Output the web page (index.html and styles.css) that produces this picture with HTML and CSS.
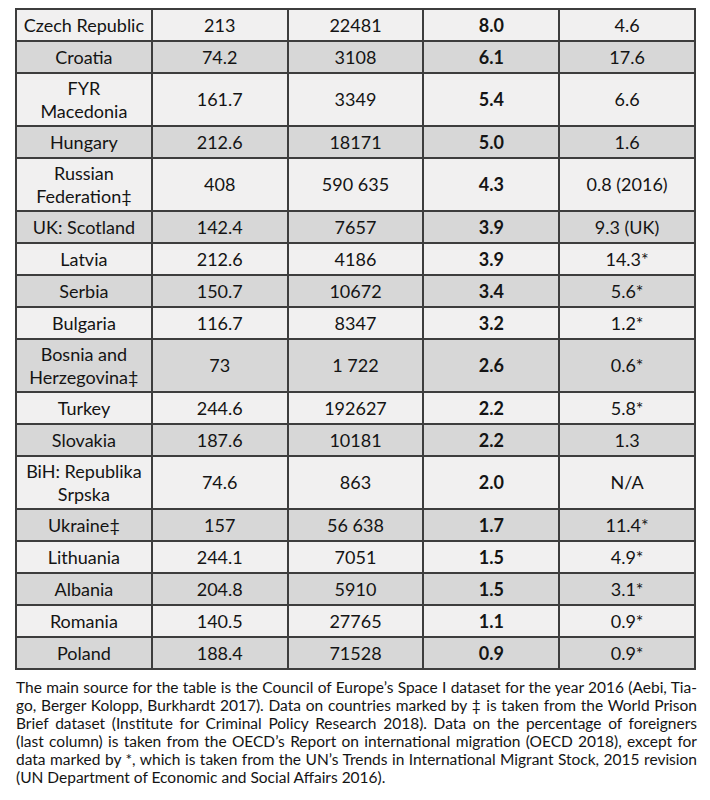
FILE: index.html
```html
<!DOCTYPE html>
<html>
<head>
<meta charset="utf-8">
<link rel="stylesheet" href="styles.css">
</head>
<body>
<div class="page">
<table class="data">
<colgroup><col><col><col><col><col></colgroup>
<tbody>
<tr class="r-light"><td>Czech Republic</td><td>213</td><td>22481</td><td class="b">8.0</td><td>4.6</td></tr>
<tr class="r-dark"><td>Croatia</td><td>74.2</td><td>3108</td><td class="b">6.1</td><td>17.6</td></tr>
<tr class="r-light tall"><td>FYR<br>Macedonia</td><td>161.7</td><td>3349</td><td class="b">5.4</td><td>6.6</td></tr>
<tr class="r-dark"><td>Hungary</td><td>212.6</td><td>18171</td><td class="b">5.0</td><td>1.6</td></tr>
<tr class="r-light tall"><td>Russian<br>Federation‡</td><td>408</td><td>590 635</td><td class="b">4.3</td><td>0.8 (2016)</td></tr>
<tr class="r-dark"><td>UK: Scotland</td><td>142.4</td><td>7657</td><td class="b">3.9</td><td>9.3 (UK)</td></tr>
<tr class="r-light"><td>Latvia</td><td>212.6</td><td>4186</td><td class="b">3.9</td><td>14.3*</td></tr>
<tr class="r-dark"><td>Serbia</td><td>150.7</td><td>10672</td><td class="b">3.4</td><td>5.6*</td></tr>
<tr class="r-light"><td>Bulgaria</td><td>116.7</td><td>8347</td><td class="b">3.2</td><td>1.2*</td></tr>
<tr class="r-dark tall"><td>Bosnia and<br>Herzegovina‡</td><td>73</td><td>1 722</td><td class="b">2.6</td><td>0.6*</td></tr>
<tr class="r-light"><td>Turkey</td><td>244.6</td><td>192627</td><td class="b">2.2</td><td>5.8*</td></tr>
<tr class="r-dark"><td>Slovakia</td><td>187.6</td><td>10181</td><td class="b">2.2</td><td>1.3</td></tr>
<tr class="r-light tall"><td>BiH: Republika<br>Srpska</td><td>74.6</td><td>863</td><td class="b">2.0</td><td>N/A</td></tr>
<tr class="r-dark"><td>Ukraine‡</td><td>157</td><td>56 638</td><td class="b">1.7</td><td>11.4*</td></tr>
<tr class="r-light"><td>Lithuania</td><td>244.1</td><td>7051</td><td class="b">1.5</td><td>4.9*</td></tr>
<tr class="r-dark"><td>Albania</td><td>204.8</td><td>5910</td><td class="b">1.5</td><td>3.1*</td></tr>
<tr class="r-light"><td>Romania</td><td>140.5</td><td>27765</td><td class="b">1.1</td><td>0.9*</td></tr>
<tr class="r-dark"><td>Poland</td><td>188.4</td><td>71528</td><td class="b">0.9</td><td>0.9*</td></tr>
</tbody>
</table>
<div class="note">
<div class="line">The main source for the table is the Council of Europe’s Space I dataset for the year 2016 (Aebi, Tia-</div>
<div class="line">go, Berger Kolopp, Burkhardt 2017). Data on countries marked by ‡ is taken from the World Prison</div>
<div class="line">Brief dataset (Institute for Criminal Policy Research 2018). Data on the percentage of foreigners</div>
<div class="line">(last column) is taken from the OECD’s Report on international migration (OECD 2018), except for</div>
<div class="line">data marked by *, which is taken from the UN’s Trends in International Migrant Stock, 2015 revision</div>
<div class="line last">(UN Department of Economic and Social Affairs 2016).</div>
</div>
</div>
</body>
</html>
```
FILE: styles.css
```css
html, body {
  margin: 0;
  padding: 0;
  background: #ffffff;
}
.page {
  padding: 8px 0 0 16px;
  width: 681px;
  font-family: "Lato", "Open Sans", "Liberation Sans", sans-serif;
  color: #141414;
}
.data {
  border-collapse: collapse;
  table-layout: fixed;
  width: 681px;
  margin-left: -1px;
  margin-top: 0;
}
.data td {
  border: 2px solid #3d3d3d;
  text-align: center;
  vertical-align: middle;
  font-size: 18px;
  line-height: 23px;
  height: 32px;
  padding: 0 2px;
  box-sizing: border-box;
}
.data tr.tall td {
  height: 53px;
}
.data td.b {
  font-weight: 700;
}
.r-light td { background: #f1f0f0; }
.r-dark td { background: #d7d7d7; }
.note {
  margin-top: 8px;
  font-size: 15.5px;
  line-height: 18px;
  color: #141414;
}
.line {
  text-align: justify;
  text-align-last: justify;
  white-space: nowrap;
}
.line.last {
  text-align: left;
  text-align-last: left;
}
```
